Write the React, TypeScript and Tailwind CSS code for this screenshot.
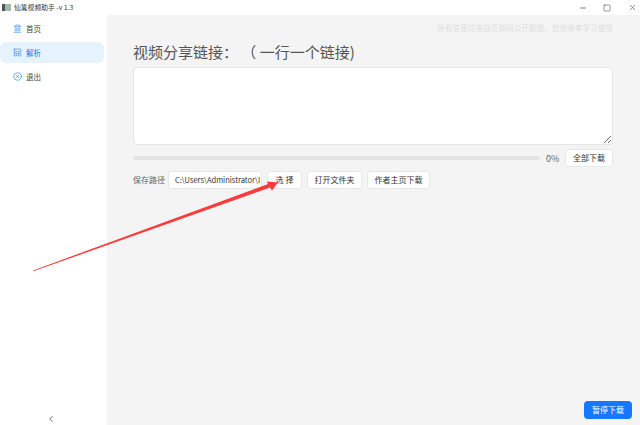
import { Landmark, Minus, Square, X, ChevronLeft, LayoutPanelTop, CircleX } from 'lucide-react'

const navItems = [
  { name: '首页', icon: Landmark, active: false },
  { name: '解析', icon: LayoutPanelTop, active: true },
  { name: '退出', icon: CircleX, active: false },
]

const btn =
  'h-[18px] rounded-[3px] bg-white border border-[#e8e8e8] text-[8px] leading-none text-[#333] flex items-center justify-center shrink-0'

const App = () => {
  return (
    <div
      className="relative w-[640px] h-[425px] overflow-hidden bg-white flex flex-col"
      style={{ fontFamily: '"Noto Sans CJK SC", "Noto Sans", sans-serif' }}
    >
      <header className="h-[15px] shrink-0 flex items-center bg-white">
        <div className="ml-[2px] w-[9px] h-[7px] bg-[#a9b3b3] border-l-[3px] border-[#4a5656]" />
        <span className="ml-[3px] text-[6.8px] leading-none text-[#333] whitespace-nowrap">仙篱视频助手 -v 1.3</span>
        <div className="ml-auto flex items-center text-[#333]">
          <Minus size={8} strokeWidth={2} className="mr-[16px]" />
          <Square size={8} strokeWidth={1.5} className="mr-[17px]" />
          <X size={9} strokeWidth={1.4} className="mr-[3px]" />
        </div>
      </header>

      <div className="flex flex-1 min-h-0">
        <aside className="w-[107px] shrink-0 flex flex-col relative">
          <nav className="pt-[3px] pr-[3px] flex flex-col gap-[3px]">
            {navItems.map((item) => (
              <div
                key={item.name}
                className={`h-[21px] rounded-[6px] flex items-center pl-[13px] ${
                  item.active ? 'bg-[#e5f3ff] text-[#1677ff]' : 'text-[#444]'
                }`}
              >
                <item.icon size={9} strokeWidth={1.8} className="text-[#2f8bf0]" />
                <span className="ml-[4px] text-[7.5px] leading-none">{item.name}</span>
              </div>
            ))}
          </nav>
          <div className="mt-auto mb-[1px] flex justify-center pr-[5px]">
            <ChevronLeft size={10} strokeWidth={2} className="text-[#555]" />
          </div>
        </aside>

        <main className="flex-1 bg-[#f4f4f4] rounded-tl-[3px] flex flex-col pl-[26px] pr-[27px] relative">
          <p className="self-end mt-[7px] h-[11px] text-[7.65px] leading-[11px] text-[#dedede] whitespace-nowrap">
            所有信息均来自互联网公开数据，仅供参考学习使用
          </p>
          <h1 className="mt-[8px] h-[21px] text-[15px] leading-[21px] text-[#555] whitespace-nowrap">
            视频分享链接： （ 一行一个链接)
          </h1>
          <textarea className="mt-[5px] h-[78px] w-full rounded-[4px] bg-white border border-[#e6e6e6] block" />

          <div className="mt-[4px] h-[18px] flex items-center">
            <div className="w-[407px] h-[4px] rounded-full bg-[#e4e4e4]" />
            <span className="ml-[6px] text-[9px] leading-none text-[#666]">0%</span>
            <button className={`${btn} ml-auto w-[48px]`}>全部下载</button>
          </div>

          <div className="mt-[4px] flex items-center">
            <span className="w-[35px] text-[8px] leading-none text-[#666] shrink-0">保存路径</span>
            <div className={`${btn} w-[94px] !justify-start pl-[6px] pr-[4px] overflow-hidden whitespace-nowrap !text-[7.5px]`}>
              C:\Users\Administrator\I
            </div>
            <button className={`${btn} w-[35px] ml-[5px]`}>选 择</button>
            <button className={`${btn} w-[55px] ml-[5px]`}>打开文件夹</button>
            <button className={`${btn} w-[63px] ml-[5px]`}>作者主页下载</button>
          </div>

          <button className="absolute right-[8px] bottom-[6px] w-[48px] h-[18px] rounded-[4px] bg-[#1677ff] text-white text-[8px] leading-none">
            暂停下载
          </button>
        </main>
      </div>

      <svg className="absolute inset-0 pointer-events-none" width="640" height="425" viewBox="0 0 640 425">
        <polygon points="33,270.5 268,184 267,181.5 278,182.5 272,190.5 270,187.5 34,271" fill="#fb3b3b" />
      </svg>
    </div>
  )
}

export default App
